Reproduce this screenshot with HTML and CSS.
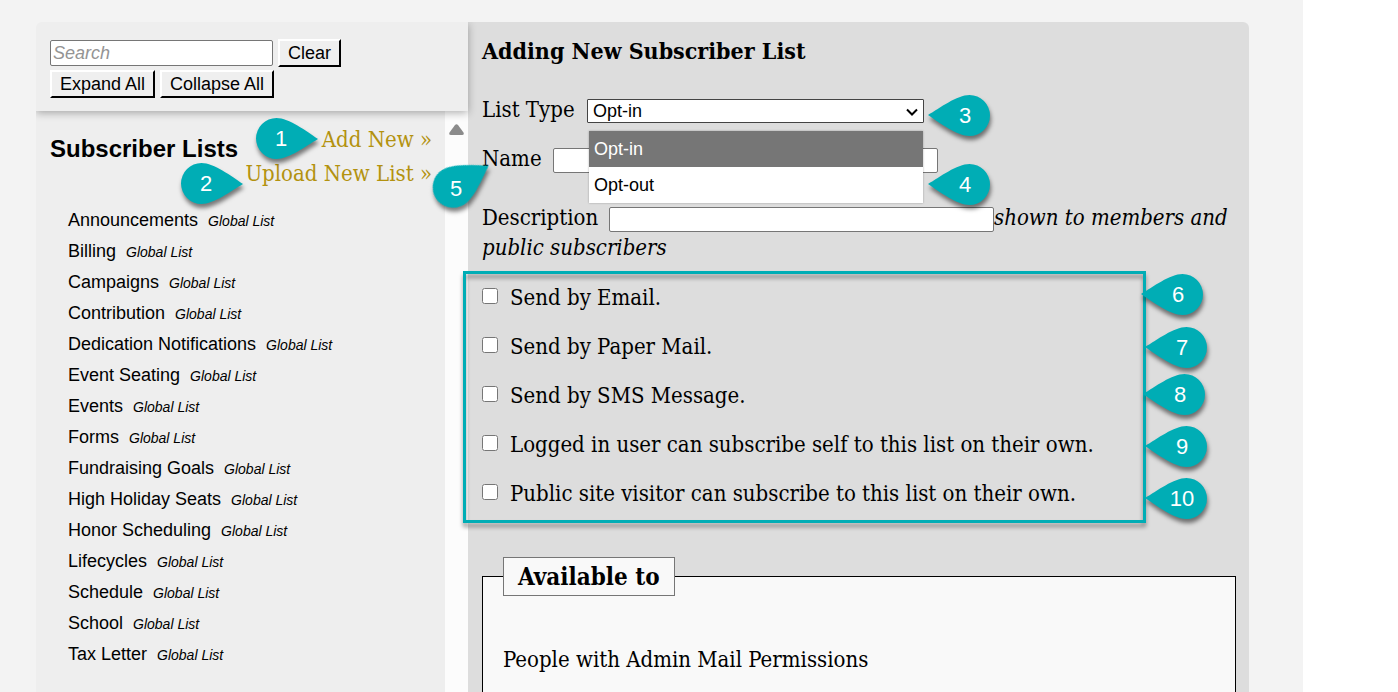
FILE: index.html
```html
<!DOCTYPE html>
<html lang="en">
<head>
    <meta charset="UTF-8">
    <meta name="viewport" content="width=device-width, initial-scale=1.0">
    <title>Subscriber Lists</title>
    <link rel="stylesheet" href="styles.css">
</head>
<body>
    <div class="page">
        <div class="panel">
            <aside class="sidebar">
                <div class="toolbar">
                    <div class="toolbar-row">
                        <input type="text" class="search" placeholder="Search" aria-label="Search">
                        <button type="button">Clear</button>
                    </div>
                    <div class="toolbar-row">
                        <button type="button">Expand All</button>
                        <button type="button">Collapse All</button>
                    </div>
                </div>
                <div class="lists">
                    <div class="lists-content">
                        <div class="lists-header">
                            <h2>Subscriber Lists</h2>
                            <nav class="list-actions">
                                <a href="#add">Add New »</a>
                                <a href="#upload">Upload New List »</a>
                            </nav>
                        </div>
                        <ul class="list-names">
                            <li>Announcements <em>Global List</em></li>
                            <li>Billing <em>Global List</em></li>
                            <li>Campaigns <em>Global List</em></li>
                            <li>Contribution <em>Global List</em></li>
                            <li>Dedication Notifications <em>Global List</em></li>
                            <li>Event Seating <em>Global List</em></li>
                            <li>Events <em>Global List</em></li>
                            <li>Forms <em>Global List</em></li>
                            <li>Fundraising Goals <em>Global List</em></li>
                            <li>High Holiday Seats <em>Global List</em></li>
                            <li>Honor Scheduling <em>Global List</em></li>
                            <li>Lifecycles <em>Global List</em></li>
                            <li>Schedule <em>Global List</em></li>
                            <li>School <em>Global List</em></li>
                            <li>Tax Letter <em>Global List</em></li>
                        </ul>
                    </div>
                    <div class="scroll-track">
                        <svg width="15" height="11" viewBox="0 0 15 11"><path d="M6 1Q7.500-.5 9 1L14.500 8.500Q15.500 11 13 11H2Q-.5 11 .5 8.500Z" fill="#8b8b8b"/></svg>
                    </div>
                </div>
            </aside>

            <main class="editor">
                <h1>Adding New Subscriber List</h1>
                <form>
                    <div class="field">
                        <label for="list-type" class="label-type">List Type</label>
                        <div class="select-wrap">
                            <select id="list-type">
                                <option>Opt-in</option>
                                <option>Opt-out</option>
                            </select>
                            <svg class="chevron" width="12" height="8" viewBox="0 0 12 8"><path d="M1 1.500L6 6.500L11 1.500" fill="none" stroke="#000" stroke-width="2"/></svg>
                            <ul class="menu">
                                <li class="selected">Opt-in</li>
                                <li>Opt-out</li>
                            </ul>
                        </div>
                    </div>
                    <div class="field">
                        <label for="name" class="label-name">Name</label>
                        <input type="text" id="name" class="text-box">
                    </div>
                    <div class="description">
                        <label for="description" class="label-description">Description</label><input type="text" id="description" class="text-box"><em>shown to members and public subscribers</em>
                    </div>
                    <div class="checks">
                        <label><input type="checkbox"> Send by Email.</label>
                        <label><input type="checkbox"> Send by Paper Mail.</label>
                        <label><input type="checkbox"> Send by SMS Message.</label>
                        <label><input type="checkbox"> Logged in user can subscribe self to this list on their own.</label>
                        <label><input type="checkbox"> Public site visitor can subscribe to this list on their own.</label>
                        <div class="highlight"></div>
                    </div>
                    <fieldset>
                        <legend>Available to</legend>
                        <p>People with Admin Mail Permissions</p>
                    </fieldset>
                </form>
            </main>
        </div>

        <!-- numbered callouts -->
        <svg width="0" height="0" class="defs">
            <symbol id="drop" viewBox="0 0 62 41"><path d="M0 20C12 13 29 0 41.500 0A20.500 20.500 0 0 1 41.500 41C29 41 12 28 0 20Z" fill="#00adb5"/></symbol>
        </svg>
        <div class="pin right pin-1"><svg><use href="#drop"/></svg><span>1</span></div>
        <div class="pin right pin-2"><svg><use href="#drop"/></svg><span>2</span></div>
        <div class="pin pin-3"><svg><use href="#drop"/></svg><span>3</span></div>
        <div class="pin pin-4"><svg><use href="#drop"/></svg><span>4</span></div>
        <div class="pin pin-5"><svg><use href="#drop"/></svg><span>5</span></div>
        <div class="pin pin-6"><svg><use href="#drop"/></svg><span>6</span></div>
        <div class="pin pin-7"><svg><use href="#drop"/></svg><span>7</span></div>
        <div class="pin pin-8"><svg><use href="#drop"/></svg><span>8</span></div>
        <div class="pin pin-9"><svg><use href="#drop"/></svg><span>9</span></div>
        <div class="pin pin-10"><svg><use href="#drop"/></svg><span>10</span></div>
    </div>
</body>
</html>
```
FILE: styles.css
```css
* {
    box-sizing: border-box;
}
body {
    margin: 0;
    padding-right: 95px;
    background-color: #fff;
    color: #000;
    font-family: "Roboto Slab", "DejaVu Serif Condensed", "DejaVu Serif", serif;
    font-size: 22px;
    line-height: 30px;
}
h1, h2, p, ul {
    margin: 0;
    padding: 0;
}
ul {
    list-style: none;
}
.page {
    position: relative;
    height: 100vh;
    padding: 22px 54px 0 36px;
    background-color: #f3f3f3;
    overflow: hidden;
}
.panel {
    display: flex;
    height: 100%;
    border-radius: 6px 6px 0 0;
    overflow: hidden;
}

/* Left column */
.sidebar {
    display: flex;
    flex-direction: column;
    flex: 0 0 432px;
    background-color: #eee;
    font-family: "Liberation Sans", Arial, sans-serif;
    font-size: 18px;
}
.toolbar {
    position: relative;
    display: flex;
    flex-direction: column;
    gap: 3px;
    padding: 17px 14px 13px;
    box-shadow: 0 2px 8px rgba(0, 0, 0, 0.3);
}
.toolbar-row {
    display: flex;
    align-items: center;
    gap: 5px;
}
input, select, button {
    font-family: "Liberation Sans", Arial, sans-serif;
    font-size: 18px;
    color: #000;
}
button {
    height: 28px;
    padding: 0 8px;
    background-color: #efefef;
    border: 2px solid;
    border-color: #fff #000 #000 #fff;
}
.search {
    width: 223px;
    height: 26px;
    padding: 0 2px;
    border: 1px solid #767676;
    border-radius: 2px;
}
.search::placeholder {
    color: #949494;
    font-style: italic;
}
.lists {
    display: flex;
    flex: 1;
}
.lists-content {
    flex: 1;
    padding: 12px 13px 0 14px;
}
.lists-header {
    display: flex;
    justify-content: space-between;
    height: 82px;
}
h2 {
    padding-top: 11px;
    font-size: 24px;
    white-space: nowrap;
}
.list-actions {
    display: flex;
    flex-direction: column;
    align-items: flex-end;
    margin-left: -40px;
    font-family: "Roboto Slab", "DejaVu Serif Condensed", "DejaVu Serif", serif;
    font-size: 22px;
    line-height: 34px;
}
.list-actions a {
    color: #b3920f;
    text-decoration: none;
}
.list-names {
    padding-left: 18px;
}
.list-names li {
    line-height: 31px;
}
.list-names em {
    margin-left: 5px;
    font-size: 14px;
    line-height: 14px;
}
.scroll-track {
    width: 23px;
    padding: 13px 4px;
    background-color: #fcfcfc;
    line-height: 0;
}

/* Right column */
.editor {
    flex: 1;
    padding: 14px 13px 0 14px;
    background-color: #ddd;
}
h1 {
    margin-bottom: 29px;
    font-size: 23px;
}
.field {
    display: flex;
    align-items: center;
    margin-bottom: 19px;
}
.field .select-wrap, .field .text-box {
    margin-top: 2px;
}
.label-type {
    width: 105px;
}
.label-name {
    width: 71px;
}
.label-description {
    display: inline-block;
    width: 127px;
}
.select-wrap {
    position: relative;
    width: 337px;
    height: 24px;
}
select {
    display: block;
    width: 100%;
    height: 24px;
    padding: 0 5px;
    background-color: #fff;
    border: 1px solid #444;
    border-radius: 1px;
    appearance: none;
}
.chevron {
    position: absolute;
    top: 9px;
    right: 6px;
}
.menu {
    position: absolute;
    top: 32px;
    left: 2px;
    right: 1px;
    z-index: 2;
    background-color: #fff;
    box-shadow: 0 0 2px rgba(0, 0, 0, 0.3);
    font-family: "Liberation Sans", Arial, sans-serif;
    font-size: 18px;
    line-height: 36px;
}
.menu li {
    padding-left: 5px;
}
.menu .selected {
    background-color: #767676;
    color: #fff;
}
.text-box {
    width: 385px;
    height: 25px;
    border: 1px solid #767676;
    border-radius: 2px;
    vertical-align: middle;
}
.description {
    margin: 29px 0 20px;
}
.checks {
    position: relative;
    display: flex;
    flex-direction: column;
    gap: 19px;
}
.checks label {
    display: flex;
    align-items: center;
    gap: 12px;
}
.checks input {
    width: 16px;
    height: 16px;
    margin: 0 0 4px;
}
.highlight {
    position: absolute;
    top: -12px;
    left: -19px;
    right: 90px;
    bottom: -14px;
    border: 3px solid #00adb5;
    filter: drop-shadow(0 4px 2px rgba(0, 0, 0, 0.4));
    pointer-events: none;
}
fieldset {
    height: 200px;
    margin: 48px 0 0;
    padding: 49px 20px;
    background-color: #f9f9f9;
    border: 1px solid #000;
}
legend {
    padding: 4px 14px 3px;
    background-color: #f9f9f9;
    border: 1px solid #767676;
    font-size: 24px;
    font-weight: bold;
}

/* Callouts */
.defs {
    position: absolute;
}
.pin {
    position: absolute;
    z-index: 3;
    width: 62px;
    height: 41px;
    color: #fff;
    font-family: "Liberation Sans", Arial, sans-serif;
    font-size: 22px;
    line-height: 41px;
    text-align: center;
}
.pin svg {
    display: block;
    width: 62px;
    height: 41px;
    overflow: visible;
    filter: drop-shadow(1px 4px 2px rgba(0, 0, 0, 0.5));
}
.pin span {
    position: absolute;
    inset: 0 0 0 12px;
}
.pin.right svg {
    rotate: 180deg;
    filter: drop-shadow(-1px -4px 2px rgba(0, 0, 0, 0.5));
}
.pin.right span {
    inset: 0 12px 0 0;
}
.pin-1 { left: 256px; top: 118px; }
.pin-2 { left: 181px; top: 163px; }
.pin-3 { left: 928px; top: 95px; }
.pin-4 { left: 928px; top: 164px; }
.pin-5 { left: 411px; top: 168px; }
.pin-6 { left: 1141px; top: 274px; }
.pin-7 { left: 1145px; top: 327px; }
.pin-8 { left: 1143px; top: 374px; }
.pin-9 { left: 1145px; top: 426px; }
.pin-10 { left: 1145px; top: 478px; }

/* this one points up to the Name label */
.pin-5 svg {
    rotate: 148deg;
    transform-origin: 42px 20px;
    filter: drop-shadow(1px -4px 2px rgba(0, 0, 0, 0.5));
}
.pin-5 span {
    inset: 0 0 0 28px;
}
```
